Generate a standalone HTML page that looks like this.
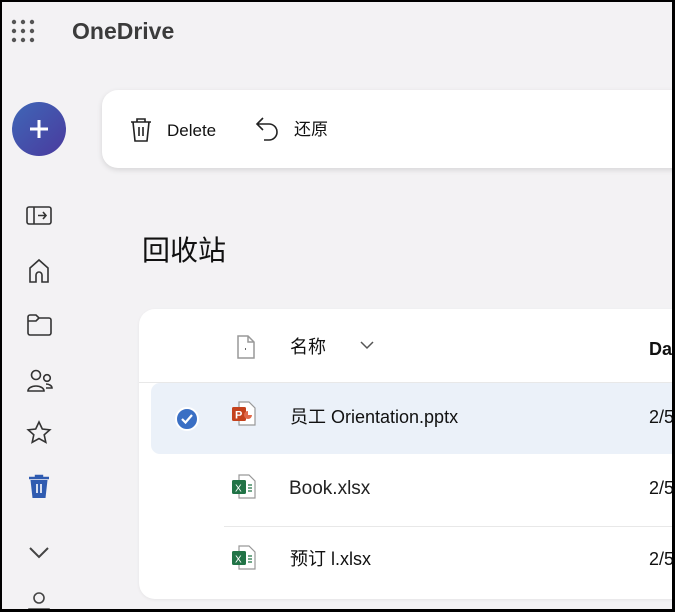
<!DOCTYPE html>
<html><head><meta charset="utf-8"><style>
*{margin:0;padding:0;box-sizing:border-box}
html,body{width:675px;height:612px;overflow:hidden}
body{background:#000;font-family:"Liberation Sans","Noto Sans CJK SC",sans-serif;position:relative}
#app{position:absolute;left:2px;top:2px;width:670px;height:607px;background:#f3f2f4;overflow:hidden}
.abs{position:absolute}
.t{font-size:18px;color:#111}
</style></head><body><div id="app">
<svg class="abs" style="left:9px;top:17px" width="26" height="24"><g fill="#555">
<circle cx="3" cy="3" r="2.2"/><circle cx="12" cy="3" r="2.2"/><circle cx="21" cy="3" r="2.2"/>
<circle cx="3" cy="12" r="2.2"/><circle cx="12" cy="12" r="2.2"/><circle cx="21" cy="12" r="2.2"/>
<circle cx="3" cy="21" r="2.2"/><circle cx="12" cy="21" r="2.2"/><circle cx="21" cy="21" r="2.2"/></g></svg>
<div class="abs" style="left:70px;top:16px;font-size:23px;font-weight:bold;color:#3b3b3b">OneDrive</div>
<div class="abs" style="left:10px;top:100px;width:54px;height:54px;border-radius:50%;background:linear-gradient(135deg,#3f67b7,#4a3a9e)"></div>
<svg class="abs" style="left:25px;top:115px" width="24" height="24"><path d="M12 3v18M3 12h18" stroke="#fff" stroke-width="3"/></svg>
<div class="abs" style="left:100px;top:88px;width:620px;height:78px;background:#fff;border-radius:16px;box-shadow:0 2px 6px rgba(0,0,0,.12)"></div>
<svg class="abs" style="left:127px;top:115px" width="24" height="26" fill="none" stroke="#222" stroke-width="1.6"><path d="M2 5h20M8 5V2h8v3M4 5l2 19h12l2-19M10 10v9M14 10v9"/></svg>
<div class="abs t" style="left:165px;top:119px;font-size:17px">Delete</div>
<svg class="abs" style="left:253px;top:114px" width="26" height="28" fill="none" stroke="#222" stroke-width="1.6"><path d="M8 2L2 8l6 6M2 8h12a8 8 0 0 1 0 16H9"/></svg>
<div class="abs t" style="left:292px;top:113px;font-size:17px">还原</div>
<svg class="abs" style="left:24px;top:204px" width="26" height="20" fill="none" stroke="#333" stroke-width="1.6"><rect x="1" y="1" width="24" height="17" rx="2"/><path d="M8 1v17M12 9.5h8M17 6l3 3.5-3 3.5"/></svg>
<svg class="abs" style="left:25px;top:256px" width="24" height="26" fill="none" stroke="#333" stroke-width="1.6"><path d="M3 24V10l9-8 9 8v14h-6v-7a3 3 0 0 0-6 0v7z"/></svg>
<svg class="abs" style="left:25px;top:312px" width="26" height="22" fill="none" stroke="#333" stroke-width="1.6"><path d="M1 3a2 2 0 0 1 2-2h6l3 3h10a2 2 0 0 1 2 2v13a2 2 0 0 1-2 2H3a2 2 0 0 1-2-2zM1 7h8l3-3"/></svg>
<svg class="abs" style="left:25px;top:367px" width="28" height="24" fill="none" stroke="#333" stroke-width="1.6"><circle cx="9" cy="6" r="4.5"/><circle cx="20" cy="9" r="3.3"/><path d="M1 22a8 5 0 0 1 16 0zM19 15a6 4 0 0 1 6 4h-6"/></svg>
<svg class="abs" style="left:24px;top:418px" width="26" height="26" fill="none" stroke="#333" stroke-width="1.6"><path d="M13 2l3.3 7 7.5.8-5.6 5 1.6 7.5L13 18.5 6.2 22.3l1.6-7.5-5.6-5 7.5-.8z"/></svg>
<svg class="abs" style="left:25px;top:472px" width="24" height="26"><path d="M2 4h20M9 4V2h6v2" stroke="#2f5bb0" stroke-width="2.4" fill="none"/><path d="M3.5 6h17l-2 18h-13z" fill="#2f5bb0"/><path d="M10 10v9M14 10v9" stroke="#fff" stroke-width="1.6"/></svg>
<svg class="abs" style="left:26px;top:544px" width="22" height="14" fill="none" stroke="#444" stroke-width="2"><path d="M2 2l9 9 9-9"/></svg>
<svg class="abs" style="left:26px;top:590px" width="22" height="20" fill="none" stroke="#444" stroke-width="1.6"><circle cx="11" cy="6" r="5"/><path d="M1 20v-3h20v3"/></svg>
<div class="abs" style="left:140px;top:227px;font-size:28px;color:#111">回收站</div>
<div class="abs" style="left:137px;top:307px;width:600px;height:290px;background:#fff;border-radius:16px;box-shadow:0 1px 3px rgba(0,0,0,.06)"></div>
<div class="abs" style="left:137px;top:380px;width:600px;height:1px;background:#e8e8e8"></div>
<svg class="abs" style="left:234px;top:332px" width="20" height="26" fill="none" stroke="#999" stroke-width="1.5"><path d="M2 2h10l6 6v16H2zM12 2v6h6"/><path d="M9 15h1" stroke="#333"/></svg>
<div class="abs t" style="left:288px;top:331px">名称</div>
<svg class="abs" style="left:357px;top:338px" width="16" height="10" fill="none" stroke="#555" stroke-width="1.5"><path d="M2 2l6 6 6-6"/></svg>
<div class="abs t" style="left:647px;top:337px;font-weight:bold">Da</div>
<div class="abs" style="left:149px;top:381px;width:600px;height:71px;background:#ebf1f9;border-radius:9px"></div>
<div class="abs" style="left:173px;top:405px;width:24px;height:24px;border-radius:50%;background:#3a6fc4;border:2px solid #fff"></div>
<svg class="abs" style="left:178px;top:411px" width="14" height="12" fill="none" stroke="#fff" stroke-width="2.2"><path d="M2 6l3.5 3.5L12 2"/></svg>
<svg class="abs" style="left:229px;top:399px" width="26" height="26"><path d="M8 1h10l6 6v17H8z" fill="#fff" stroke="#999" stroke-width="1.2"/><rect x="1" y="6" width="14" height="14" rx="1.5" fill="#c4421d"/><text x="4" y="17.5" font-size="11" font-weight="bold" fill="#fff" font-family="Liberation Sans">P</text><path d="M17 10a4 4 0 1 0 4 4h-4z" fill="#e0694a"/></svg>
<div class="abs t" style="left:288px;top:401px">员工 Orientation.pptx</div>
<div class="abs t" style="left:647px;top:405px">2/5</div>
<svg class="abs" style="left:229px;top:472px" width="26" height="26"><path d="M8 1h10l6 6v17H8z" fill="#fff" stroke="#999" stroke-width="1.2"/><rect x="1" y="6" width="14" height="14" rx="1.5" fill="#217346"/><text x="4" y="17.5" font-size="10" fill="#fff" font-family="Liberation Sans">X</text><path d="M17 11h4M17 14h4M17 17h4" stroke="#217346" stroke-width="1.2"/></svg>
<div class="abs t" style="left:287px;top:476px;color:#222;font-size:19px">Book.xlsx</div>
<div class="abs t" style="left:647px;top:476px">2/5</div>
<div class="abs" style="left:222px;top:524px;width:520px;height:1px;background:#e8e8e8"></div>
<svg class="abs" style="left:229px;top:543px" width="26" height="26"><path d="M8 1h10l6 6v17H8z" fill="#fff" stroke="#999" stroke-width="1.2"/><rect x="1" y="6" width="14" height="14" rx="1.5" fill="#217346"/><text x="4" y="17.5" font-size="10" fill="#fff" font-family="Liberation Sans">X</text><path d="M17 11h4M17 14h4M17 17h4" stroke="#217346" stroke-width="1.2"/></svg>
<div class="abs t" style="left:288px;top:543px">预订 l.xlsx</div>
<div class="abs t" style="left:647px;top:547px">2/5</div>
</div>
<div class="abs" style="left:672px;top:0;width:3px;height:612px;background:#000"></div>
</body></html>
